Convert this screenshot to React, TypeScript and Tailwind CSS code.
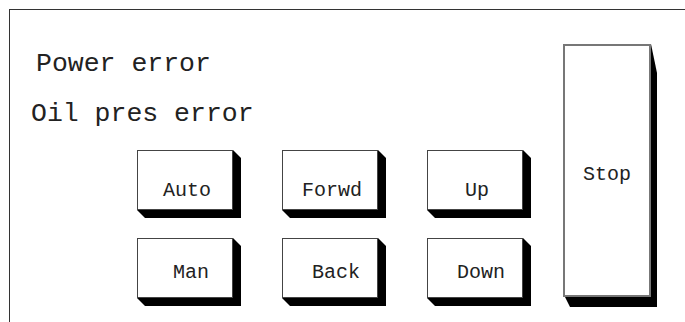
const mono = { fontFamily: '"Liberation Mono", "Courier New", monospace' };

type KeyProps = {
  label: string;
  className: string;
  pad?: string;
  stop?: boolean;
};

function Key({ label, className, pad, stop }: KeyProps) {
  return (
    <div className={`relative ${className}`}>
      {stop ? (
        <svg className="absolute left-0 top-0 overflow-visible" width="88" height="253">
          <polygon points="88,0 94,29 94,263 7,263 2,253" fill="#000" />
        </svg>
      ) : (
        <svg className="absolute left-0 top-0 overflow-visible" width="96" height="60">
          <polygon points="96,0 104,8 104,68 8,68 0,60" fill="#000" />
        </svg>
      )}
      <div
        className={`relative flex h-full w-full items-center justify-center bg-white text-[20px] text-[#222] ${
          stop ? 'border-2 border-[#777] pt-[8px]' : `border border-[#444] ${pad}`
        }`}
      >
        {label}
      </div>
    </div>
  );
}

const topPad = 'pt-[22px] pl-[4px]';
const lowPad = 'pt-[10px] pl-[12px]';

export default function App() {
  return (
    <div className="h-[322px] w-[685px] overflow-hidden bg-white" style={mono}>
      <div className="ml-[9px] mt-[9px] flex h-[313px] border-l border-t border-[#333]">
        <div className="flex w-[544px] flex-col">
          <div className="pl-[26px] pt-[40px] text-[26.5px] leading-[28px] text-[#222]">Power error</div>
          <div className="pl-[21px] pt-[22px] text-[26.5px] leading-[28px] text-[#222]">Oil pres error</div>
          <div className="ml-[127px] mt-[22px] grid grid-cols-[96px_96px_96px] gap-x-[49px] gap-y-[28px]">
            <Key label="Auto" pad={topPad} className="h-[60px] w-[96px]" />
            <Key label="Forwd" pad={topPad} className="h-[60px] w-[96px]" />
            <Key label="Up" pad={topPad} className="h-[60px] w-[96px]" />
            <Key label="Man" pad={lowPad} className="h-[60px] w-[96px]" />
            <Key label="Back" pad={lowPad} className="h-[60px] w-[96px]" />
            <Key label="Down" pad={lowPad} className="h-[60px] w-[96px]" />
          </div>
        </div>
        <div className="pl-[9px] pt-[34px]">
          <Key label="Stop" stop className="h-[253px] w-[88px]" />
        </div>
      </div>
    </div>
  );
}
